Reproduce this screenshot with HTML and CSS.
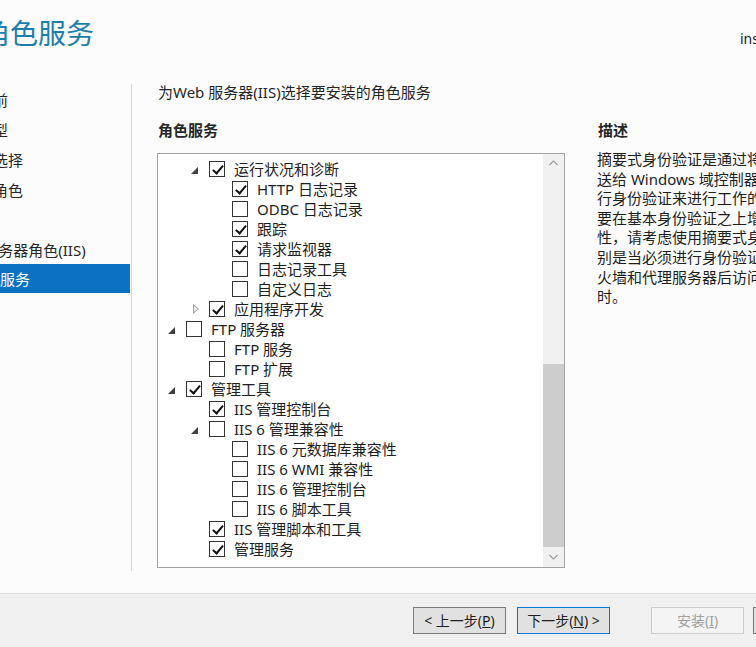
FILE: index.html
```html
<!DOCTYPE html>
<html lang="zh-CN">
<head>
<meta charset="utf-8">
<title>角色服务</title>
<link rel="stylesheet" href="styles.css">
</head>
<body>
<div class="page">
  <header class="header">
    <h1 class="title">角色服务</h1>
    <div class="server">inst-server01</div>
  </header>

  <div class="main">
    <nav class="nav">
      <div class="nav-item"><span>开始之前</span></div>
      <div class="nav-item"><span>安装类型</span></div>
      <div class="nav-item"><span>服务器选择</span></div>
      <div class="nav-item"><span>服务器角色</span></div>
      <div class="nav-item"><span>功能</span></div>
      <div class="nav-item"><span>Web 服务器角色(IIS)</span></div>
      <div class="nav-item sub selected"><span>角色服务</span></div>
    </nav>

    <section class="content">
      <div class="intro">为Web 服务器(IIS)选择要安装的角色服务</div>
      <div class="columns">
        <div class="left-col">
          <div class="heading">角色服务</div>
          <div class="tree">
            <div class="tree-list">
              <div class="row l2"><span class="exp open"></span><span class="cb on"></span><span class="lbl">运行状况和诊断</span></div>
              <div class="row l3"><span class="exp"></span><span class="cb on"></span><span class="lbl">HTTP 日志记录</span></div>
              <div class="row l3"><span class="exp"></span><span class="cb"></span><span class="lbl">ODBC 日志记录</span></div>
              <div class="row l3"><span class="exp"></span><span class="cb on"></span><span class="lbl">跟踪</span></div>
              <div class="row l3"><span class="exp"></span><span class="cb on"></span><span class="lbl">请求监视器</span></div>
              <div class="row l3"><span class="exp"></span><span class="cb"></span><span class="lbl">日志记录工具</span></div>
              <div class="row l3"><span class="exp"></span><span class="cb"></span><span class="lbl">自定义日志</span></div>
              <div class="row l2"><span class="exp closed"></span><span class="cb on"></span><span class="lbl">应用程序开发</span></div>
              <div class="row l1"><span class="exp open"></span><span class="cb"></span><span class="lbl">FTP 服务器</span></div>
              <div class="row l2"><span class="exp"></span><span class="cb"></span><span class="lbl">FTP 服务</span></div>
              <div class="row l2"><span class="exp"></span><span class="cb"></span><span class="lbl">FTP 扩展</span></div>
              <div class="row l1"><span class="exp open"></span><span class="cb on"></span><span class="lbl">管理工具</span></div>
              <div class="row l2"><span class="exp"></span><span class="cb on"></span><span class="lbl">IIS 管理控制台</span></div>
              <div class="row l2"><span class="exp open"></span><span class="cb"></span><span class="lbl">IIS 6 管理兼容性</span></div>
              <div class="row l3"><span class="exp"></span><span class="cb"></span><span class="lbl">IIS 6 元数据库兼容性</span></div>
              <div class="row l3"><span class="exp"></span><span class="cb"></span><span class="lbl">IIS 6 WMI 兼容性</span></div>
              <div class="row l3"><span class="exp"></span><span class="cb"></span><span class="lbl">IIS 6 管理控制台</span></div>
              <div class="row l3"><span class="exp"></span><span class="cb"></span><span class="lbl">IIS 6 脚本工具</span></div>
              <div class="row l2"><span class="exp"></span><span class="cb on"></span><span class="lbl">IIS 管理脚本和工具</span></div>
              <div class="row l2"><span class="exp"></span><span class="cb on"></span><span class="lbl">管理服务</span></div>
            </div>
            <div class="scrollbar">
              <div class="arrow up"><svg width="9" height="6" viewBox="0 0 9 6"><path d="M0.5 5 L4.5 1 L8.5 5" fill="none" stroke="#9a9a9a" stroke-width="1.1"/></svg></div>
              <div class="track"><div class="thumb"></div></div>
              <div class="arrow down"><svg width="9" height="6" viewBox="0 0 9 6"><path d="M0.5 1 L4.5 5 L8.5 1" fill="none" stroke="#9a9a9a" stroke-width="1.1"/></svg></div>
            </div>
          </div>
        </div>
        <div class="right-col">
          <div class="heading">描述</div>
          <div class="desc">
            <div>摘要式身份验证是通过将密码哈希发</div>
            <div>送给 Windows 域控制器对用户进</div>
            <div>行身份验证来进行工作的。如果需</div>
            <div>要在基本身份验证之上增加安全</div>
            <div>性，请考虑使用摘要式身份验证，特</div>
            <div>别是当必须进行身份验证的用户从防</div>
            <div>火墙和代理服务器后访问网站</div>
            <div>时。</div>
          </div>
        </div>
      </div>
    </section>
  </div>

  <footer class="footer">
    <button class="btn">&lt; 上一步(<u>P</u>)</button>
    <button class="btn primary">下一步(<u>N</u>) &gt;</button>
    <button class="btn disabled">安装(<u>I</u>)</button>
    <button class="btn cancel">取消</button>
  </footer>
</div>
</body>
</html>
```

FILE: styles.css
```css
* { box-sizing: border-box; }

html, body {
  margin: 0;
  padding: 0;
}

body {
  width: 756px;
  height: 647px;
  overflow: hidden;
  background: #fcfcfc;
  font-family: "Noto Sans", "Noto Sans CJK SC", sans-serif;
  font-size: 15px;
  color: #1e1e1e;
}

.page {
  width: 756px;
  height: 647px;
  overflow: hidden;
  display: flex;
  flex-direction: column;
}

/* header */
.header {
  height: 80px;
  display: grid;
  grid-template-columns: 740px auto;
  flex-shrink: 0;
}

.title {
  margin: 13px 0 0 -18px;
  font-size: 28px;
  line-height: 40px;
  font-weight: 400;
  color: #1b7eab;
  white-space: nowrap;
}

.server {
  margin-top: 30px;
  font-size: 14px;
  line-height: 18px;
  white-space: nowrap;
  color: #1e1e1e;
}

/* main */
.main {
  height: 513px;
  display: flex;
  flex-shrink: 0;
}

.nav {
  width: 132px;
  height: 487px;
  margin-top: 4px;
  padding-top: 1px;
  border-right: 1px solid #dadada;
  flex-shrink: 0;
}

.nav-item {
  width: 130px;
  height: 30px;
  line-height: 30px;
  overflow: hidden;
  white-space: nowrap;
  color: #262626;
}

.nav-item span {
  display: inline-block;
  margin-left: -52px;
}

.nav-item.sub span {
  margin-left: -30px;
}

.nav-item.selected {
  background: #0b72c2;
  color: #ffffff;
  height: 29px;
  margin-top: -1px;
}

.content {
  flex: 1;
  padding-left: 25px;
  overflow: hidden;
}

.intro {
  margin-top: 2px;
  padding-left: 1px;
  line-height: 20px;
  white-space: nowrap;
  color: #262626;
}

.columns {
  display: flex;
  gap: 32px;
}

.left-col {
  width: 408px;
  flex-shrink: 0;
}

.right-col {
  flex: 1;
  overflow: hidden;
}

.heading {
  margin-top: 18px;
  padding-left: 1px;
  line-height: 20px;
  font-weight: 700;
  color: #262626;
  white-space: nowrap;
}

/* tree */
.tree {
  margin-top: 13px;
  height: 415px;
  border: 1px solid #a3a3a3;
  background: #ffffff;
  display: flex;
}

.tree-list {
  flex: 1;
  padding-top: 5px;
}

.row {
  display: flex;
  align-items: center;
  height: 20px;
  white-space: nowrap;
}

.row.l1 { padding-left: 8px; }
.row.l2 { padding-left: 31px; }
.row.l3 { padding-left: 54px; }

.exp {
  width: 20px;
  height: 20px;
  flex-shrink: 0;
  position: relative;
}

.exp.open::after {
  content: "";
  position: absolute;
  left: 2px;
  top: 8px;
  width: 0;
  height: 0;
  border-left: 7px solid transparent;
  border-bottom: 7px solid #404040;
}

.exp.closed::after {
  content: "";
  position: absolute;
  left: 4px;
  top: 5px;
  width: 6px;
  height: 10px;
  background: #a6a6a6;
  clip-path: polygon(0 0, 100% 50%, 0 100%, 0 0, 1.2px 2.2px, 1.2px calc(100% - 2.2px), calc(100% - 1.6px) 50%, 1.2px 2.2px);
}

.cb {
  width: 16px;
  height: 16px;
  border: 1px solid #333333;
  background: #ffffff;
  flex-shrink: 0;
  position: relative;
}

.cb.on::after {
  content: "";
  position: absolute;
  left: 5px;
  top: 1px;
  width: 4px;
  height: 9px;
  border-right: 2px solid #111111;
  border-bottom: 2px solid #111111;
  transform: rotate(40deg);
}

.lbl {
  margin-left: 9px;
  line-height: 20px;
  color: #1e1e1e;
}

/* scrollbar */
.scrollbar {
  width: 21px;
  flex-shrink: 0;
  background: #f0f0f0;
  display: flex;
  flex-direction: column;
}

.arrow {
  display: flex;
  align-items: center;
  justify-content: center;
}

.arrow.up { height: 18px; }
.arrow.down { height: 20px; }

.track {
  flex: 1;
  padding-top: 192px;
}

.thumb {
  height: 183px;
  background: #cdcdcd;
}

/* description */
.desc {
  margin-top: 10px;
  line-height: 19.6px;
  white-space: nowrap;
  color: #1e1e1e;
}

/* footer */
.footer {
  flex: 1;
  background: #f0f0f0;
  border-top: 1px solid #dcdcdc;
  padding: 13px 0 0 413px;
  display: flex;
  align-items: flex-start;
  white-space: nowrap;
}

.btn {
  width: 93px;
  height: 27px;
  flex-shrink: 0;
  margin: 0;
  padding: 0;
  border: 1px solid #7a7a7a;
  background: #e1e1e1;
  font-family: "Noto Sans", "Noto Sans CJK SC", sans-serif;
  font-size: 14px;
  line-height: 25px;
  color: #1e1e1e;
}

.btn + .btn { margin-left: 11px; }

.btn.primary {
  border-color: #0078d7;
}

.btn.disabled {
  margin-left: 41px;
  border-color: #cccccc;
  background: #f4f4f4;
  color: #a0a0a0;
}

.btn.cancel {
  margin-left: 9px;
}
```
